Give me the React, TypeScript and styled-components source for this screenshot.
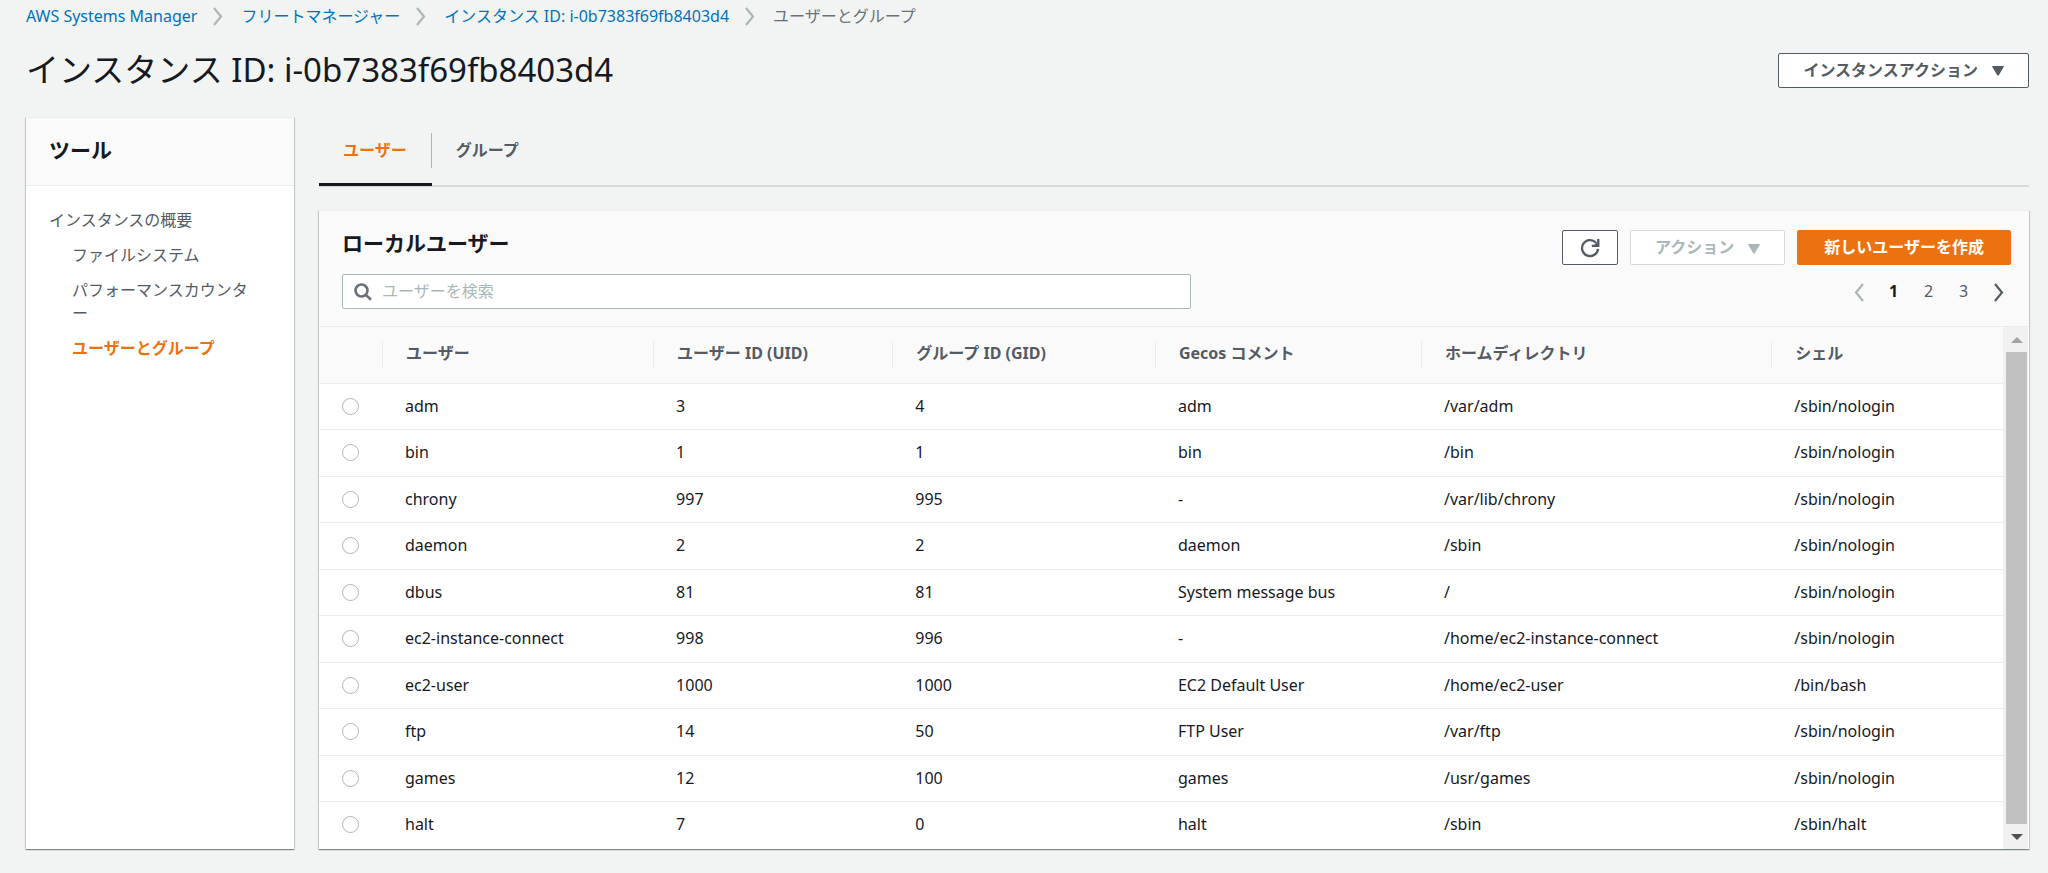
import React, { useState } from "react";
import styled, { createGlobalStyle } from "styled-components";

const color = {
  page: "#f2f3f3",
  header: "#fafafa",
  text: "#16191f",
  secondary: "#545b64",
  muted: "#687078",
  disabled: "#aab7b8",
  border: "#d5dbdb",
  divider: "#eaeded",
  link: "#0073bb",
  accent: "#ec7211",
};

const GlobalStyle = createGlobalStyle`
  *, *::before, *::after { box-sizing: border-box; }
  body {
    margin: 0;
    background: ${color.page};
    color: ${color.text};
    font: 400 16px/23px "Noto Sans", "Noto Sans CJK JP", sans-serif;
  }
  button, input { font: inherit; }
  h1, h2, ul, ol { margin: 0; padding: 0; }
  ul, ol { list-style: none; }
  svg { display: block; flex: none; }
`;

const Page = styled.div`
  display: flex;
  flex-direction: column;
  min-height: 100vh;
  padding: 4px 19px 24px 26px;
`;

const Crumbs = styled.ol`
  display: flex;
  align-items: center;
  gap: 18px;
  height: 24px;
`;

const Crumb = styled.li`
  display: flex;
  align-items: center;
  gap: 16px;
  color: ${color.muted};
`;

const CrumbLink = styled.a`
  color: ${color.link};
  text-decoration: none;
`;

const TitleBar = styled.header`
  display: flex;
  align-items: center;
  justify-content: space-between;
  margin: 24px 0 29px;
`;

const PageTitle = styled.h1`
  font-size: 33px;
  font-weight: 400;
  line-height: 36px;
`;

const Button = styled.button<{ $variant?: "primary" | "icon" }>`
  display: flex;
  align-items: center;
  gap: 14px;
  height: 35px;
  padding: 0 ${(p) => (p.$variant === "primary" ? "26px" : p.$variant === "icon" ? "17px" : "24px")};
  border: 1px solid ${(p) => (p.$variant === "primary" ? color.accent : color.secondary)};
  border-radius: 2px;
  background: ${(p) => (p.$variant === "primary" ? color.accent : "#fff")};
  color: ${(p) => (p.$variant === "primary" ? "#fff" : color.secondary)};
  font-weight: 700;
  white-space: nowrap;
  cursor: pointer;
  &:disabled {
    border-color: ${color.border};
    color: ${color.disabled};
    cursor: default;
  }
`;

const Columns = styled.div`
  display: grid;
  grid-template-columns: 268px minmax(0, 1fr);
  gap: 25px;
  flex: 1;
`;

const Panel = styled.section`
  border-top: 1px solid ${color.divider};
  background: #fff;
  box-shadow:
    0 1px 1px 0 rgba(0, 28, 36, 0.3),
    1px 1px 1px 0 rgba(0, 28, 36, 0.15),
    -1px 1px 1px 0 rgba(0, 28, 36, 0.15);
`;

const PanelTitle = styled.h2`
  font-size: 21px;
  font-weight: 700;
  line-height: 26px;
`;

const SideHeader = styled.div`
  padding: 19px 23px 22px;
  border-bottom: 1px solid ${color.divider};
  background: ${color.header};
`;

const SideNav = styled.nav`
  padding: 23px;
`;

const NavList = styled.ul<{ $nested?: boolean }>`
  display: flex;
  flex-direction: column;
  gap: 12px;
  padding: ${(p) => (p.$nested ? "12px 12px 0 23px" : "0")};
`;

const NavLink = styled.a<{ $active?: boolean }>`
  display: block;
  color: ${(p) => (p.$active ? color.accent : color.secondary)};
  font-weight: ${(p) => (p.$active ? 700 : 400)};
  text-decoration: none;
  line-break: anywhere;
`;

const Main = styled.main`
  display: flex;
  flex-direction: column;
  gap: 23px;
`;

const Tabs = styled.div`
  display: flex;
  border-bottom: 2px solid ${color.border};
`;

const Tab = styled.button`
  height: 69px;
  margin-bottom: -1px;
  padding: 16px 0 15px;
  border: 0;
  border-bottom: 3px solid transparent;
  background: none;
  color: ${color.secondary};
  font-weight: 700;
  cursor: pointer;
  &[aria-selected="true"] {
    border-bottom-color: ${color.text};
    color: ${color.accent};
  }
  &:not(:last-child) span {
    border-right: 1px solid ${color.disabled};
  }
`;

const TabLabel = styled.span`
  display: block;
  padding: 6px 24px;
`;

const TablePanel = styled(Panel)`
  display: flex;
  flex-direction: column;
  flex: 1;
`;

const TableHeader = styled.div`
  display: flex;
  flex-direction: column;
  gap: 9px;
  padding: 19px 18px 17px 23px;
  border-bottom: 1px solid ${color.divider};
  background: ${color.header};
`;

const HeaderRow = styled.div`
  display: flex;
  justify-content: space-between;
`;

const Actions = styled.div`
  display: flex;
  gap: 12px;
`;

const Search = styled.label`
  display: flex;
  align-items: center;
  gap: 10px;
  width: calc(50% + 14px);
  height: 35px;
  padding: 0 11px;
  border: 1px solid ${color.disabled};
  border-radius: 2px;
  background: #fff;
`;

const SearchInput = styled.input`
  flex: 1;
  min-width: 0;
  padding: 0;
  border: 0;
  outline: 0;
  background: none;
  color: ${color.text};
  &::placeholder { color: ${color.disabled}; opacity: 1; }
`;

const Pagination = styled.nav`
  display: flex;
  align-items: center;
  margin-right: -5px;
`;

const PageButton = styled.button`
  display: flex;
  justify-content: center;
  width: 35px;
  padding: 0;
  border: 0;
  background: none;
  color: ${color.secondary};
  cursor: pointer;
  &[aria-current="page"] { color: ${color.text}; font-weight: 700; }
  &:disabled { color: ${color.disabled}; cursor: default; }
`;

const TableArea = styled.div`
  display: flex;
  flex: 1;
  align-items: stretch;
`;

const TableBox = styled.div`
  flex: 1;
  min-width: 0;
`;

const Table = styled.table`
  width: 100%;
  table-layout: fixed;
  border-spacing: 0;
`;

const Col = styled.col<{ $width?: string }>`
  width: ${(p) => p.$width ?? "auto"};
`;

const HeadCell = styled.th`
  padding: 14px 0;
  border-bottom: 1px solid ${color.divider};
  background: ${color.header};
  color: ${color.secondary};
  font-weight: 700;
  text-align: left;
`;

const HeadLabel = styled.div`
  padding: 1px 0 4px 23px;
  border-left: 1px solid ${color.divider};
`;

const Row = styled.tr`
  &:nth-child(even) td { padding-bottom: 12px; }
  &:not(:last-child) td { border-bottom: 1px solid ${color.divider}; }
`;

const Cell = styled.td`
  padding: 11px 0 11px 23px;
`;

const Radio = styled.input`
  appearance: none;
  display: block;
  width: 17px;
  height: 17px;
  margin: 0;
  border: 1px solid ${color.disabled};
  border-radius: 50%;
  background: #fff;
  &:checked { border: 5px solid ${color.link}; }
`;

const ScrollTrack = styled.div`
  display: flex;
  flex-direction: column;
  width: 25px;
  margin-right: 1px;
  background: #f1f1f1;
`;

const ScrollArrow = styled.span`
  display: flex;
  align-items: center;
  justify-content: center;
  height: 25px;
  padding-left: 2px;
`;

const ScrollThumb = styled.span`
  flex: 1;
  margin: 0 1px 0 3px;
  background: #c1c1c1;
`;

const Chevron = ({ flip = false }: { flip?: boolean }) => (
  <svg width="10" height="20" viewBox="0 0 10 20" fill="none" stroke="currentColor" strokeWidth="2.2" aria-hidden="true">
    <path d={flip ? "M9 2 2 10.5 9 19" : "M1 2 8 10.5 1 19"} />
  </svg>
);

const CrumbSeparator = styled.span`
  color: ${color.disabled};
`;

const Caret = () => (
  <svg width="12" height="12" viewBox="0 0 12 12" fill="currentColor" aria-hidden="true">
    <path d="M.6 2h10.800a.5.5 0 0 1 .4.800L6.800 11.200a.9.9 0 0 1-1.600 0L.2 2.800A.5.5 0 0 1 .6 2z" />
  </svg>
);

const RefreshIcon = () => (
  <svg width="20" height="20" viewBox="0 0 20 20" fill="none" stroke="currentColor" strokeWidth="2.300" aria-hidden="true">
    <path d="M18 10.800A8 8 0 1 1 16 4.800" />
    <path d="M18.300 1v6.800h-6.500" />
    <path d="M17.800 3.200v4.200h-4.200z" fill="currentColor" stroke="none" />
  </svg>
);

const SearchIcon = () => (
  <svg width="18" height="18" viewBox="0 0 18 18" fill="none" stroke={color.muted} strokeWidth="2.600" aria-hidden="true">
    <circle cx="7.500" cy="7.500" r="6" />
    <path d="m11.600 11.600 5.400 5.200" />
  </svg>
);

const crumbs = ["AWS Systems Manager", "フリートマネージャー", "インスタンス ID: i-0b7383f69fb8403d4"];
const tools = ["ファイルシステム", "パフォーマンスカウンター", "ユーザーとグループ"];
const tabs = ["ユーザー", "グループ"];
const colWidths = ["63px", "16.1%", "14.2%", "15.6%", "15.8%", "20.8%", undefined];
const headings = ["ユーザー", "ユーザー ID (UID)", "グループ ID (GID)", "Gecos コメント", "ホームディレクトリ", "シェル"];
const users = [
  ["adm", "3", "4", "adm", "/var/adm", "/sbin/nologin"],
  ["bin", "1", "1", "bin", "/bin", "/sbin/nologin"],
  ["chrony", "997", "995", "-", "/var/lib/chrony", "/sbin/nologin"],
  ["daemon", "2", "2", "daemon", "/sbin", "/sbin/nologin"],
  ["dbus", "81", "81", "System message bus", "/", "/sbin/nologin"],
  ["ec2-instance-connect", "998", "996", "-", "/home/ec2-instance-connect", "/sbin/nologin"],
  ["ec2-user", "1000", "1000", "EC2 Default User", "/home/ec2-user", "/bin/bash"],
  ["ftp", "14", "50", "FTP User", "/var/ftp", "/sbin/nologin"],
  ["games", "12", "100", "games", "/usr/games", "/sbin/nologin"],
  ["halt", "7", "0", "halt", "/sbin", "/sbin/halt"],
];

export default function App() {
  const [tab, setTab] = useState(0);
  const [selected, setSelected] = useState("");

  return (
    <>
      <GlobalStyle />
      <Page lang="ja">
        <nav aria-label="パンくずリスト">
          <Crumbs>
            {crumbs.map((label) => (
              <Crumb key={label}>
                <CrumbLink href="#">{label}</CrumbLink>
                <CrumbSeparator><Chevron /></CrumbSeparator>
              </Crumb>
            ))}
            <Crumb aria-current="page">ユーザーとグループ</Crumb>
          </Crumbs>
        </nav>

        <TitleBar>
          <PageTitle>インスタンス ID: i-0b7383f69fb8403d4</PageTitle>
          <Button type="button" aria-haspopup="menu">インスタンスアクション<Caret /></Button>
        </TitleBar>

        <Columns>
          <Panel>
            <SideHeader><PanelTitle>ツール</PanelTitle></SideHeader>
            <SideNav aria-label="ツール">
              <NavList>
                <li>
                  <NavLink href="#">インスタンスの概要</NavLink>
                  <NavList $nested>
                    {tools.map((label, i) => (
                      <li key={label}><NavLink href="#" $active={i === 2}>{label}</NavLink></li>
                    ))}
                  </NavList>
                </li>
              </NavList>
            </SideNav>
          </Panel>

          <Main>
            <Tabs role="tablist">
              {tabs.map((label, i) => (
                <Tab key={label} type="button" role="tab" aria-selected={tab === i} onClick={() => setTab(i)}>
                  <TabLabel>{label}</TabLabel>
                </Tab>
              ))}
            </Tabs>

            <TablePanel>
              <TableHeader>
                <HeaderRow>
                  <PanelTitle>ローカルユーザー</PanelTitle>
                  <Actions>
                    <Button type="button" $variant="icon" aria-label="更新"><RefreshIcon /></Button>
                    <Button type="button" disabled>アクション<Caret /></Button>
                    <Button type="button" $variant="primary">新しいユーザーを作成</Button>
                  </Actions>
                </HeaderRow>
                <HeaderRow>
                  <Search>
                    <SearchIcon />
                    <SearchInput type="search" placeholder="ユーザーを検索" aria-label="ユーザーを検索" />
                  </Search>
                  <Pagination aria-label="ページ">
                    <PageButton type="button" disabled aria-label="前のページ"><Chevron flip /></PageButton>
                    <PageButton type="button" aria-current="page">1</PageButton>
                    <PageButton type="button">2</PageButton>
                    <PageButton type="button">3</PageButton>
                    <PageButton type="button" aria-label="次のページ"><Chevron /></PageButton>
                  </Pagination>
                </HeaderRow>
              </TableHeader>

              <TableArea>
                <TableBox>
                  <Table>
                    <colgroup>
                      {colWidths.map((w, i) => <Col key={i} $width={w} />)}
                    </colgroup>
                    <thead>
                      <tr>
                        <HeadCell aria-label="選択" />
                        {headings.map((h) => (
                          <HeadCell key={h} scope="col"><HeadLabel>{h}</HeadLabel></HeadCell>
                        ))}
                      </tr>
                    </thead>
                    <tbody>
                      {users.map((user) => (
                        <Row key={user[0]}>
                          <Cell>
                            <Radio
                              type="radio"
                              name="user"
                              aria-label={user[0]}
                              checked={selected === user[0]}
                              onChange={() => setSelected(user[0])}
                            />
                          </Cell>
                          {user.map((value, i) => <Cell key={i}>{value}</Cell>)}
                        </Row>
                      ))}
                    </tbody>
                  </Table>
                </TableBox>
                <ScrollTrack aria-hidden="true">
                  <ScrollArrow>
                    <svg width="12" height="6" viewBox="0 0 12 6" fill="#a3a3a3"><path d="M6 0l6 6H0z" /></svg>
                  </ScrollArrow>
                  <ScrollThumb />
                  <ScrollArrow>
                    <svg width="12" height="6" viewBox="0 0 12 6" fill="#505050"><path d="M6 6l6-6H0z" /></svg>
                  </ScrollArrow>
                </ScrollTrack>
              </TableArea>
            </TablePanel>
          </Main>
        </Columns>
      </Page>
    </>
  );
}
